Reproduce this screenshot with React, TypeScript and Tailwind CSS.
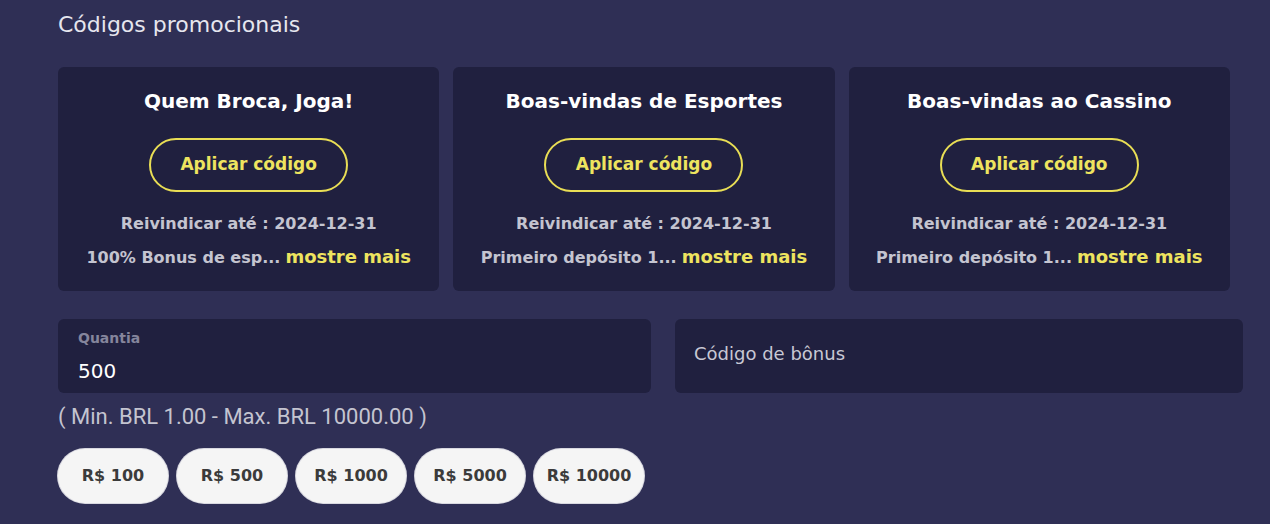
const promos = [
  { title: "Quem Broca, Joga!", desc: "100% Bonus de esp..." },
  { title: "Boas-vindas de Esportes", desc: "Primeiro depósito 1..." },
  { title: "Boas-vindas ao Cassino", desc: "Primeiro depósito 1..." },
]

const amounts = ["R$ 100", "R$ 500", "R$ 1000", "R$ 5000", "R$ 10000"]

function PromoCard({ title, desc }: { title: string; desc: string }) {
  return (
    <div className="flex h-[224px] flex-col items-center rounded-md bg-[#20203f] pt-[21px]">
      <h3 className="text-[20px] font-bold leading-[26px] text-white">{title}</h3>
      <button className="mt-[24px] h-[54px] w-[199px] rounded-full border-2 border-[#e9de55] text-[17px] font-bold text-[#eee45f]">
        Aplicar código
      </button>
      <p className="mt-[20px] text-[16px] font-semibold leading-[24px] text-[#c4c4d0]">
        Reivindicar até : 2024-12-31
      </p>
      <p className="mt-[9px] flex items-baseline text-[16px] font-semibold leading-[24px] text-[#c4c4d0]">
        <span>{desc}</span>
        <span className="ml-[5px] text-[18px] font-bold text-[#eee45f]">mostre mais</span>
      </p>
    </div>
  )
}

export default function App() {
  return (
    <div
      className="min-h-[524px] w-[1270px] bg-[#2f2f55] pl-[58px] pt-[11px]"
      style={{ fontFamily: "'DejaVu Sans', 'Noto Sans', sans-serif" }}
    >
      <h2 className="text-[22px] leading-[28px] text-[#e6e6ee]">Códigos promocionais</h2>

      {/* promo cards */}
      <div className="mt-[28px] grid w-[1172px] grid-cols-3 gap-[14px]">
        {promos.map((p) => (
          <PromoCard key={p.title} {...p} />
        ))}
      </div>

      {/* inputs */}
      <div className="mt-[28px] flex w-[1185px] gap-[24px]">
        <div className="flex h-[74px] w-[593px] flex-col rounded-md bg-[#20203f] px-[20px] pt-[10px]">
          <span className="text-[14px] font-bold leading-[18px] text-[#85859c]">Quantia</span>
          <span className="mt-[11px] text-[20px] leading-[26px] text-white">500</span>
        </div>
        <div className="flex h-[74px] flex-1 items-center rounded-md bg-[#20203f] px-[19px] pb-[6px]">
          <span className="text-[18px] text-[#c8c8d4]">Código de bônus</span>
        </div>
      </div>

      <p
        className="mt-[10px] text-[22px] leading-[28px] text-[#c4c4d0]"
        style={{ fontFamily: "Roboto, sans-serif" }}
      >
        ( Min. BRL 1.00 - Max. BRL 10000.00 )
      </p>

      <div className="mt-[18px] flex gap-[9px]">
        {amounts.map((a) => (
          <button
            key={a}
            className="h-[54px] w-[110px] rounded-full bg-[#f5f5f5] text-[16px] font-bold text-[#3b3b3b] shadow-[0_0_0_1px_#d8d8e0]"
          >
            {a}
          </button>
        ))}
      </div>
    </div>
  )
}
